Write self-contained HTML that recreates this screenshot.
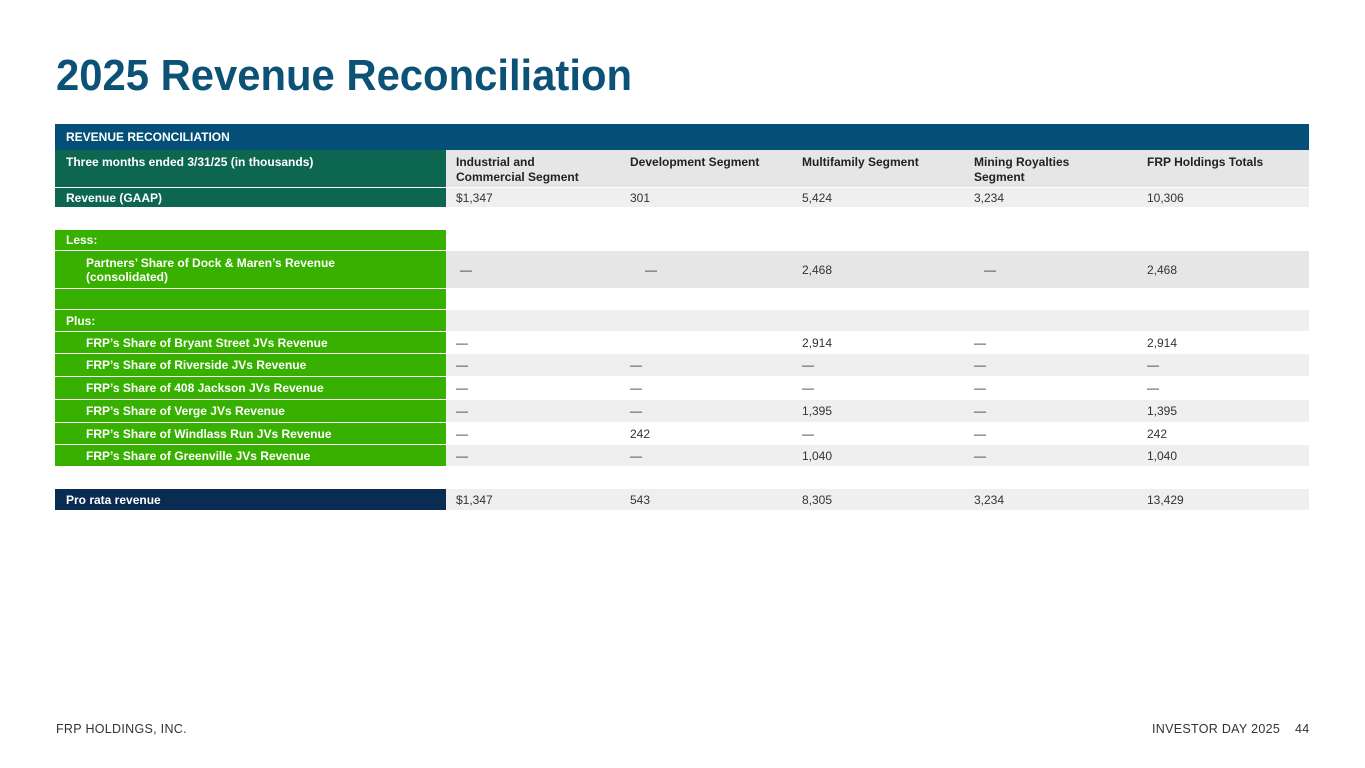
<!DOCTYPE html>
<html><head><style>
body{margin:0;width:1365px;height:768px;background:#fff;position:relative;overflow:hidden;font-family:"Liberation Sans",sans-serif}
.r{position:absolute;left:55px;width:1254px}
.l{position:absolute;left:0;top:0;bottom:0;width:391px;color:#fff;font-weight:bold;font-size:12px;box-sizing:border-box;padding-left:11px;display:flex;align-items:center;line-height:14px}
.l.i{padding-left:31px}
.c{position:absolute;top:0;bottom:0;font-size:12px;color:#333;display:flex;align-items:center}
.dg{background:#0c6650}.g{background:#38b000}.nv{background:#0a2b52}
.gr{background:#efefef}.gr2{background:#e6e6e6}
.h{font-weight:bold;color:#222;align-items:flex-start;padding-top:5px;line-height:15px}
.f{position:absolute;top:722px;font-size:12.5px;color:#333;letter-spacing:0.3px}
</style></head><body>
<svg style="position:absolute;left:0;top:0" width="700" height="110"><text x="56" y="90" font-family="Liberation Sans" font-weight="bold" font-size="44" fill="#0b5276" textLength="576" lengthAdjust="spacingAndGlyphs">2025 Revenue Reconciliation</text></svg>

<div class="r" style="top:124px;height:26px;background:#034f78"><div class="l" style="background:none">REVENUE RECONCILIATION</div></div>

<div class="r gr2" style="top:150px;height:37px"><div class="l dg" style="align-items:flex-start;padding-top:5px">Three months ended 3/31/25 (in thousands)</div>
<div class="c h" style="left:401px">Industrial and<br>Commercial Segment</div><div class="c h" style="left:575px">Development Segment</div><div class="c h" style="left:747px">Multifamily Segment</div><div class="c h" style="left:919px">Mining Royalties<br>Segment</div><div class="c h" style="left:1092px">FRP Holdings Totals</div></div>

<div class="r gr" style="top:188px;height:19px"><div class="l dg">Revenue (GAAP)</div>
<div class="c" style="left:401px">$1,347</div><div class="c" style="left:575px">301</div><div class="c" style="left:747px">5,424</div><div class="c" style="left:919px">3,234</div><div class="c" style="left:1092px">10,306</div></div>

<div class="r" style="top:230px;height:20px"><div class="l g">Less:</div></div>
<div class="r gr2" style="top:251px;height:37px"><div class="l g i">Partners’ Share of Dock &amp; Maren’s Revenue<br>(consolidated)</div>
<div class="c" style="left:405px">—</div><div class="c" style="left:590px">—</div><div class="c" style="left:747px">2,468</div><div class="c" style="left:929px">—</div><div class="c" style="left:1092px">2,468</div></div>
<div class="r" style="top:289px;height:20px"><div class="l g"></div></div>
<div class="r gr" style="top:310px;height:21px"><div class="l g">Plus:</div></div>

<div class="r" style="top:332px;height:21px"><div class="l g i">FRP’s Share of Bryant Street JVs Revenue</div>
<div class="c" style="left:401px">—</div><div class="c" style="left:747px">2,914</div><div class="c" style="left:919px">—</div><div class="c" style="left:1092px">2,914</div></div>
<div class="r gr" style="top:354px;height:22px"><div class="l g i">FRP’s Share of Riverside JVs Revenue</div>
<div class="c" style="left:401px">—</div><div class="c" style="left:575px">—</div><div class="c" style="left:747px">—</div><div class="c" style="left:919px">—</div><div class="c" style="left:1092px">—</div></div>
<div class="r" style="top:377px;height:22px"><div class="l g i">FRP’s Share of 408 Jackson JVs Revenue</div>
<div class="c" style="left:401px">—</div><div class="c" style="left:575px">—</div><div class="c" style="left:747px">—</div><div class="c" style="left:919px">—</div><div class="c" style="left:1092px">—</div></div>
<div class="r gr" style="top:400px;height:22px"><div class="l g i">FRP’s Share of Verge JVs Revenue</div>
<div class="c" style="left:401px">—</div><div class="c" style="left:575px">—</div><div class="c" style="left:747px">1,395</div><div class="c" style="left:919px">—</div><div class="c" style="left:1092px">1,395</div></div>
<div class="r" style="top:423px;height:21px"><div class="l g i">FRP’s Share of Windlass Run JVs Revenue</div>
<div class="c" style="left:401px">—</div><div class="c" style="left:575px">242</div><div class="c" style="left:747px">—</div><div class="c" style="left:919px">—</div><div class="c" style="left:1092px">242</div></div>
<div class="r gr" style="top:445px;height:21px"><div class="l g i">FRP’s Share of Greenville JVs Revenue</div>
<div class="c" style="left:401px">—</div><div class="c" style="left:575px">—</div><div class="c" style="left:747px">1,040</div><div class="c" style="left:919px">—</div><div class="c" style="left:1092px">1,040</div></div>

<div class="r gr" style="top:489px;height:21px"><div class="l nv">Pro rata revenue</div>
<div class="c" style="left:401px">$1,347</div><div class="c" style="left:575px">543</div><div class="c" style="left:747px">8,305</div><div class="c" style="left:919px">3,234</div><div class="c" style="left:1092px">13,429</div></div>

<div class="f" style="left:56px">FRP HOLDINGS, INC.</div>
<div class="f" style="left:1152px">INVESTOR DAY 2025</div>
<div class="f" style="left:1295px">44</div>
</body></html>
